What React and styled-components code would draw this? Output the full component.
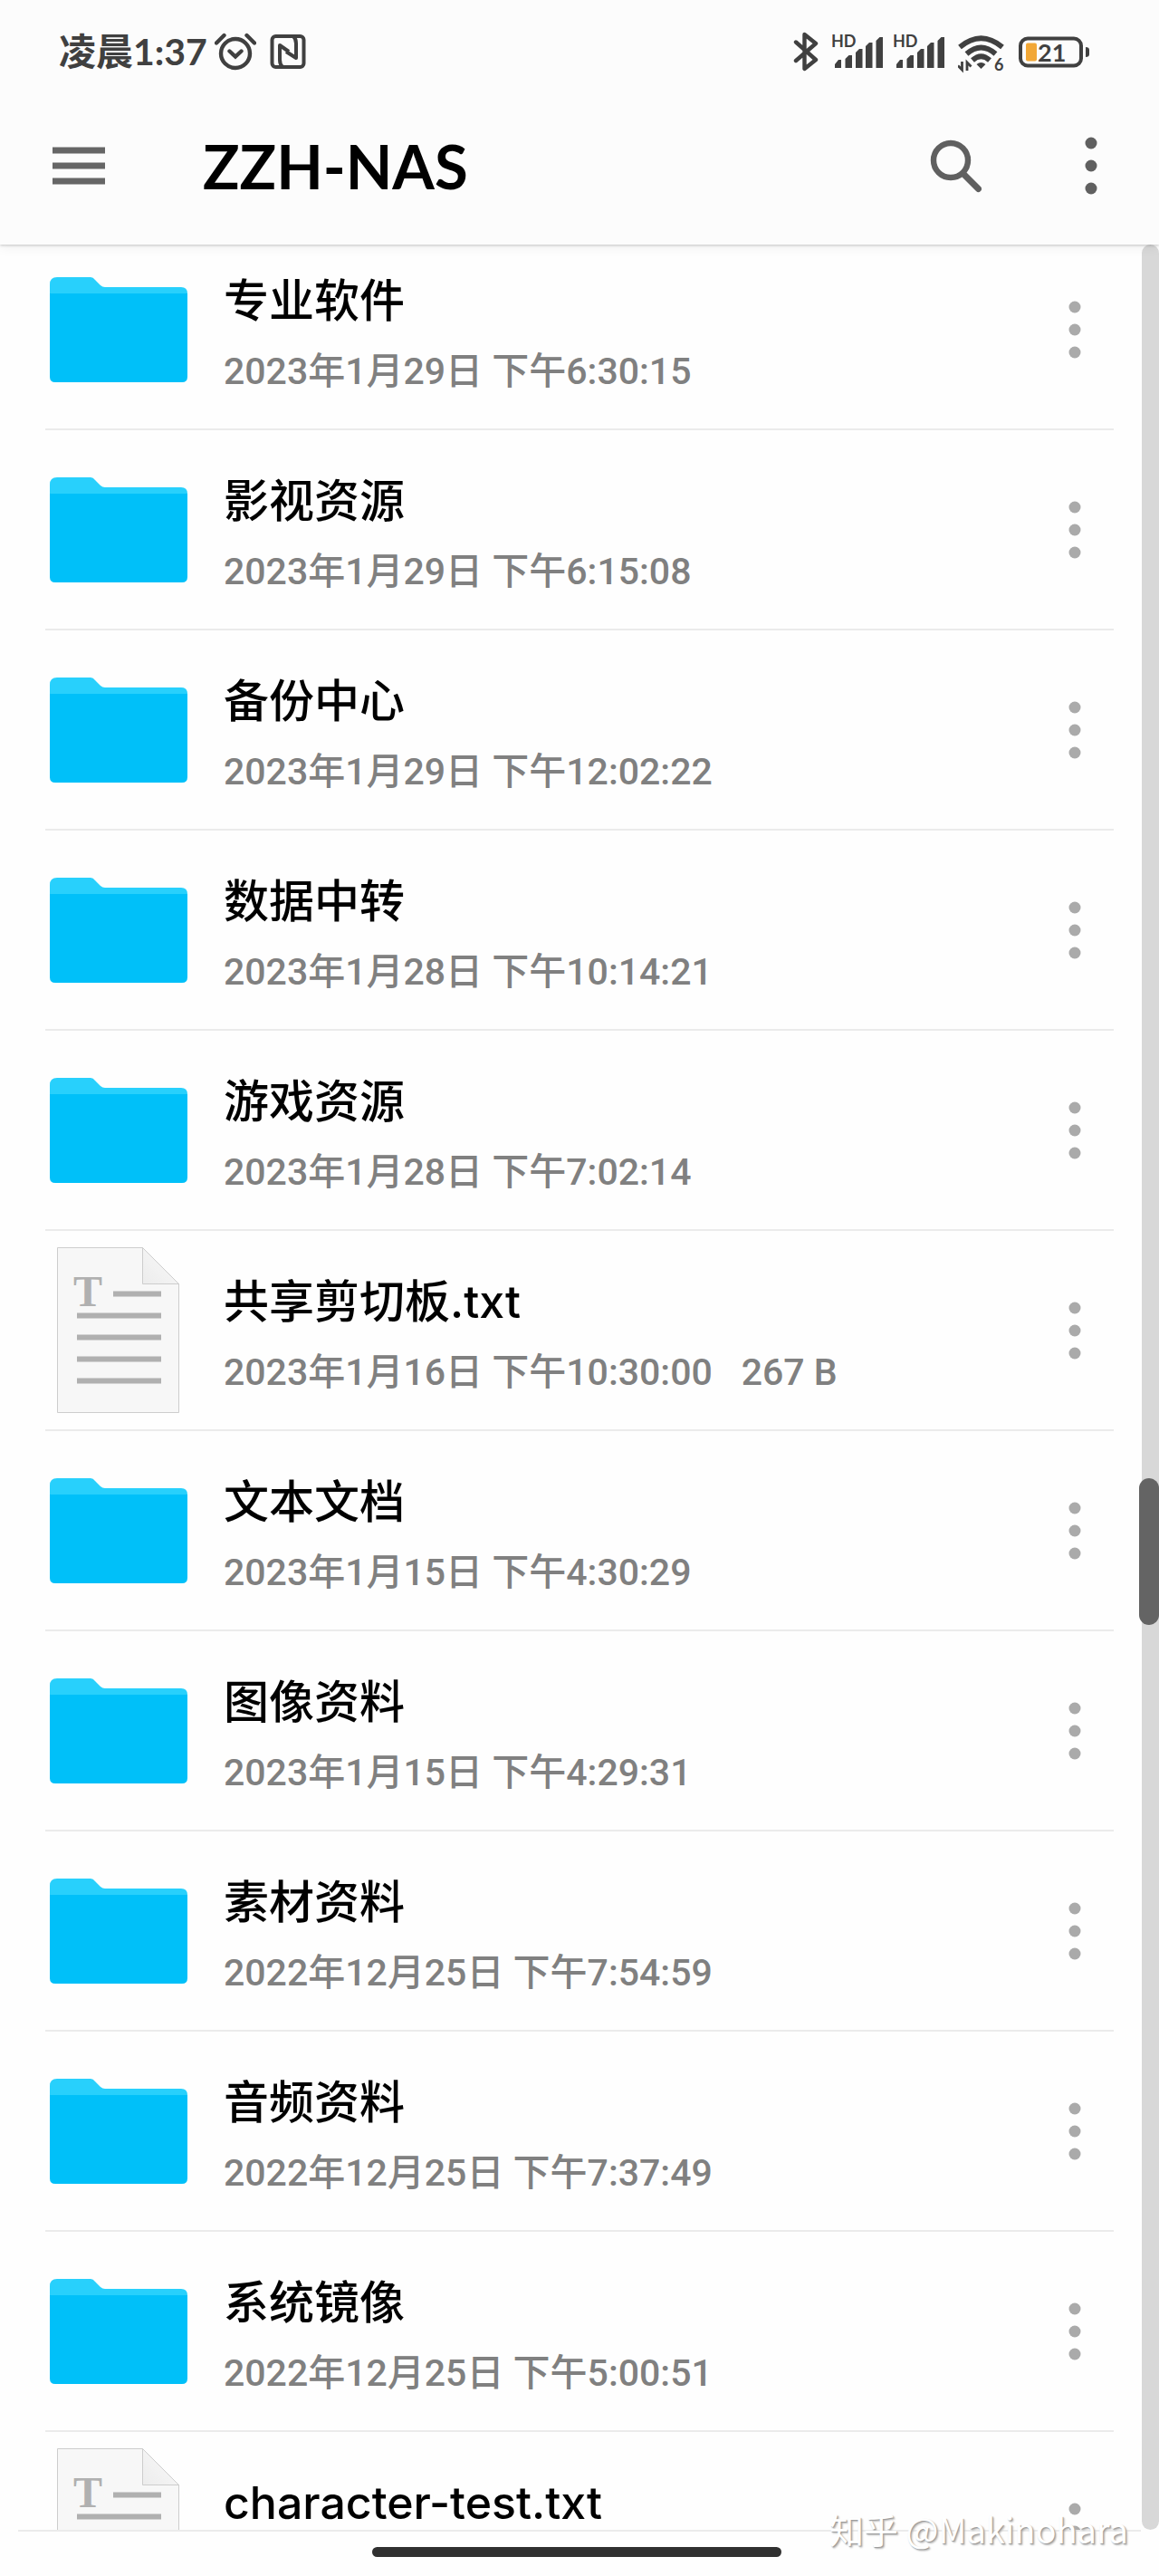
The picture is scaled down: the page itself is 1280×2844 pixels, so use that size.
import React from "react";
import styled, { createGlobalStyle } from "styled-components";

const GlobalStyle = createGlobalStyle`
  * {
    box-sizing: border-box;
  }
  body {
    margin: 0;
    background: #fefefe;
    font-family: Lato, "Noto Sans CJK SC", sans-serif;
  }
`;

const Screen = styled.div`
  position: relative;
  display: flex;
  flex-direction: column;
  height: 100vh;
  overflow: hidden;
`;

const Header = styled.header`
  position: relative;
  z-index: 1;
  flex: none;
  padding-bottom: 18px;
  background: #fcfcfc;
  box-shadow: 0 1px 3px rgba(0, 0, 0, 0.2), 0 4px 12px rgba(0, 0, 0, 0.05);
`;

const StatusBar = styled.div`
  display: flex;
  align-items: center;
  justify-content: space-between;
  height: 114px;
  padding: 0 77px 0 65px;
  color: #404040;
`;

const StatusGroup = styled.div`
  display: flex;
  align-items: center;
  gap: ${(props) => props.$gap}px;
`;

const Clock = styled.time`
  font-size: 41px;
  font-weight: 700;
  line-height: 44px;
`;

const Toolbar = styled.div`
  display: flex;
  align-items: center;
  height: 138px;
  padding: 0 45px 0 57px;
`;

const IconButton = styled.button`
  display: flex;
  align-items: center;
  justify-content: center;
  width: 60px;
  height: 84px;
  padding: 0;
  border: 0;
  background: none;
  color: ${(props) => props.$color || "#606060"};
`;

const Title = styled.h1`
  flex: 1;
  margin: 0 0 0 107px;
  color: #000;
  font-size: 67px;
  font-weight: 700;
  line-height: 80px;
`;

const Actions = styled.div`
  display: flex;
  gap: 90px;
`;

const Content = styled.main`
  display: flex;
  flex: 1;
  min-height: 0;
  overflow: hidden;
`;

// the list is scrolled a little under the header
const FileList = styled.ul`
  flex: 1;
  min-width: 0;
  margin: -16px 31px 0 50px;
  padding: 0;
  list-style: none;
`;

const FileRow = styled.li`
  display: flex;
  align-items: center;
  height: 221px;
  padding: 0 13px 0 5px;
  border-bottom: 2px solid #ebebeb;
`;

const Thumb = styled.div`
  display: flex;
  justify-content: center;
  flex: none;
  width: 152px;
`;

const FileText = styled.div`
  flex: 1;
  min-width: 0;
  margin-left: 40px;
`;

const FileName = styled.div`
  margin-top: 8px;
  color: #000;
  font-family: Inter, "Noto Sans CJK SC", sans-serif;
  font-size: 50px;
  font-weight: 500;
  line-height: 72px;
`;

const FileMeta = styled.div`
  display: flex;
  gap: 32px;
  margin-top: 12px;
  color: #808080;
  font-family: Roboto, "Noto Sans CJK SC", sans-serif;
  font-size: 41px;
  font-weight: 500;
  line-height: 60px;
`;

const ScrollTrack = styled.div`
  position: relative;
  flex: none;
  width: 19px;
  border-radius: 10px;
  background: #d8d8d8;
`;

const ScrollThumb = styled.div`
  position: absolute;
  top: 54%;
  right: 0;
  width: 22px;
  height: 162px;
  border-radius: 11px;
  background: #646464;
`;

const NavBar = styled.footer`
  display: flex;
  justify-content: center;
  flex: none;
  height: 51px;
  margin: 0 20px;
  padding: 17px 6px 0 0;
  border-top: 2px solid #ebebeb;
`;

const HomePill = styled.div`
  width: 452px;
  height: 11px;
  border-radius: 6px;
  background: #303030;
`;

const Watermark = styled.div`
  position: absolute;
  z-index: 2;
  right: 34px;
  bottom: 26px;
  color: #fff;
  font-family: "Noto Sans CJK SC", sans-serif;
  font-size: 38px;
  line-height: 52px;
  text-shadow: 1px 1px 1px #999, 2px 2px 2px #bbb;
`;

const files = [
  { name: "专业软件", date: "2023年1月29日 下午6:30:15" },
  { name: "影视资源", date: "2023年1月29日 下午6:15:08" },
  { name: "备份中心", date: "2023年1月29日 下午12:02:22" },
  { name: "数据中转", date: "2023年1月28日 下午10:14:21" },
  { name: "游戏资源", date: "2023年1月28日 下午7:02:14" },
  {
    name: "共享剪切板.txt",
    date: "2023年1月16日 下午10:30:00",
    size: "267 B",
    isText: true,
  },
  { name: "文本文档", date: "2023年1月15日 下午4:30:29" },
  { name: "图像资料", date: "2023年1月15日 下午4:29:31" },
  { name: "素材资料", date: "2022年12月25日 下午7:54:59" },
  { name: "音频资料", date: "2022年12月25日 下午7:37:49" },
  { name: "系统镜像", date: "2022年12月25日 下午5:00:51" },
  { name: "character-test.txt", isText: true },
];

const AlarmIcon = () => (
  <svg width="46" height="44" viewBox="0 0 46 44" fill="none" stroke="currentColor" strokeWidth="4.4">
    <circle cx="23" cy="24" r="16" />
    <path d="M16.5 21.5l6.5 6 6.5-6" strokeLinecap="round" />
    <path d="M2 12.5L10.5 4M44 12.5L35.5 4" strokeLinecap="round" />
  </svg>
);

const NfcIcon = () => (
  <svg width="40" height="44" viewBox="0 0 40 44" fill="none" stroke="currentColor" strokeWidth="4">
    <rect x="2.5" y="5" width="35" height="34" rx="4" />
    <path d="M14 39q-3-3-3-8V15l10 7M26 5q3 3 3 8v16l-11-7" strokeLinejoin="round" />
  </svg>
);

const BluetoothIcon = () => (
  <svg width="28" height="44" viewBox="0 0 28 44" fill="none" stroke="currentColor" strokeWidth="4.4">
    <path d="M3 11.5L25 31 12.5 41V3L25 13 3 32" strokeLinecap="round" strokeLinejoin="round" />
  </svg>
);

const SignalIcon = () => (
  <svg width="56" height="52" viewBox="0 -4 56 52" fill="currentColor">
    <text x="-1" y="17" fontSize="18" fontWeight="700">
      HD
    </text>
    <path d="M3 40v-4l4-5h3v9zM14.5 40V30l4-4h3.5v14zM26 40V23l4-4h3.5v21zM37 40V16l4-4h3.5v28zM48.5 40V10l4-4H56v34z" />
  </svg>
);

const WifiIcon = () => (
  <svg width="52" height="60" viewBox="0 -8 52 60" fill="none" stroke="currentColor" strokeWidth="5.8">
    <path d="M2 17Q25.5-2.5 49 17M9.5 24.5Q25.5 10.5 41.5 24.5M16 31.500q9.5-8.500 19 0" />
    <path d="M20.5 36q5-4 10 0l-5 5z" fill="currentColor" stroke="none" />
    <path d="M4.5 33v9L0 37.5M10 43v-9l4.5 4.5" strokeWidth="2.8" />
    <text x="40" y="43" fontSize="18" fontWeight="700" fill="currentColor" stroke="none">
      6
    </text>
  </svg>
);

const BatteryIcon = () => (
  <svg width="78" height="44" viewBox="0 0 78 44" fill="currentColor">
    <rect x="2" y="7.5" width="67" height="30" rx="8" fill="none" stroke="currentColor" strokeWidth="4" />
    <rect x="8" y="12.5" width="12" height="20" rx="2" fill="#f2a735" />
    <path d="M74 17q4 0 4 3v5q0 3-4 3z" />
    <text x="21" y="32.5" fontSize="27" fontWeight="700">
      21
    </text>
  </svg>
);

const MenuIcon = () => (
  <svg width="60" height="42" viewBox="0 0 60 42" stroke="currentColor" strokeWidth="7">
    <path d="M1 4h58M1 21h58M1 38h58" />
  </svg>
);

const SearchIcon = () => (
  <svg width="58" height="60" viewBox="0 0 58 60" fill="none" stroke="currentColor">
    <circle cx="24" cy="24" r="19" strokeWidth="6.4" />
    <path d="M38 39L54.5 55.5" strokeWidth="7" strokeLinecap="round" />
  </svg>
);

const DotsIcon = () => (
  <svg width="14" height="64" viewBox="0 0 14 64" fill="currentColor">
    <circle cx="7" cy="7" r="6.5" />
    <circle cx="7" cy="32" r="6.5" />
    <circle cx="7" cy="57" r="6.5" />
  </svg>
);

const FolderIcon = () => (
  <svg width="152" height="116" viewBox="0 0 152 116">
    <path d="M0 8q0-8 8-8h37q3 0 5 3l6 6q2 2 5 2h84q7 0 7 7v10H0z" fill="#28d0fc" />
    <path d="M0 18h152v92q0 6-6 6H6q-6 0-6-6z" fill="#00c0f9" />
  </svg>
);

const TextFileIcon = () => (
  <svg width="136" height="184" viewBox="0 0 136 184">
    <defs>
      <linearGradient id="fold" x1="0" y1="1" x2="1" y2="0">
        <stop offset="0" stopColor="#ececec" />
        <stop offset="1" stopColor="#fafafa" />
      </linearGradient>
    </defs>
    <path d="M.5.5H94.5L134.5 40.5V182.5H.5z" fill="#f7f7f7" stroke="#cdcdcd" />
    <path d="M94.5.5V40.5H134.5z" fill="url(#fold)" stroke="#cdcdcd" />
    <text x="18" y="65" fontFamily="Liberation Serif, serif" fontWeight="700" fontSize="48" fill="#b0b0b0">
      T
    </text>
    <path d="M62 51.5h53M22 75.5h93M22 99.5h93M22 123.5h93M22 147.5h93" stroke="#b0b0b0" strokeWidth="6" />
  </svg>
);

function FileItem({ file }) {
  return (
    <FileRow>
      <Thumb>{file.isText ? <TextFileIcon /> : <FolderIcon />}</Thumb>
      <FileText>
        <FileName>{file.name}</FileName>
        <FileMeta>
          <span>{file.date || "\u00a0"}</span>
          {file.size && <span>{file.size}</span>}
        </FileMeta>
      </FileText>
      <IconButton type="button" $color="#aaaaaa">
        <DotsIcon />
      </IconButton>
    </FileRow>
  );
}

function App() {
  return (
    <>
      <GlobalStyle />
      <Screen>
        <Header>
          <StatusBar>
            <StatusGroup $gap={15}>
              <StatusGroup $gap={8}>
                <Clock>凌晨1:37</Clock>
                <AlarmIcon />
              </StatusGroup>
              <NfcIcon />
            </StatusGroup>
            <StatusGroup $gap={15}>
              <BluetoothIcon />
              <StatusGroup $gap={12}>
                <SignalIcon />
                <SignalIcon />
              </StatusGroup>
              <WifiIcon />
              <BatteryIcon />
            </StatusGroup>
          </StatusBar>
          <Toolbar>
            <IconButton type="button" $color="#666666">
              <MenuIcon />
            </IconButton>
            <Title>ZZH-NAS</Title>
            <Actions>
              <IconButton type="button">
                <SearchIcon />
              </IconButton>
              <IconButton type="button">
                <DotsIcon />
              </IconButton>
            </Actions>
          </Toolbar>
        </Header>
        <Content>
          <FileList>
            {files.map((file) => (
              <FileItem key={file.name} file={file} />
            ))}
          </FileList>
          <ScrollTrack>
            <ScrollThumb />
          </ScrollTrack>
        </Content>
        <NavBar>
          <HomePill />
        </NavBar>
        <Watermark>知乎 @Makinohara</Watermark>
      </Screen>
    </>
  );
}

export default App;
